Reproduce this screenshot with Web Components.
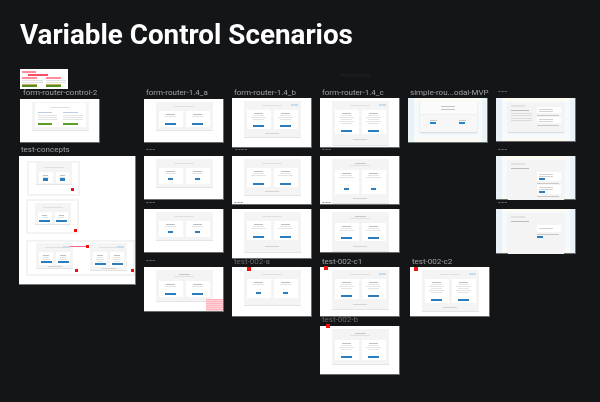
<!DOCTYPE html>
<html>
<head>
<meta charset="utf-8">
<title>Variable Control Scenarios</title>
<style>
    html, body { margin: 0; height: 100%; background: #141517; overflow: hidden; }
</style>
</head>
<body>
<design-board>
    <span slot="title">Variable Control Scenarios</span>

    <note-frame x="20" y="69" w="48" h="20"></note-frame>

    <canvas-frame x="20" y="99" w="80" h="44" label="form-router-control-2" lx="3" ly="-11"><mock-modal h="28" variant="green"></mock-modal></canvas-frame>

    <canvas-frame x="144" y="99" w="80" h="44" label="form-router-1.4_a" lx="2" ly="-11"><mock-modal h="28" ch="16" lines="2"></mock-modal></canvas-frame>
    <canvas-frame x="144" y="156" w="80" h="44" label="---"><mock-modal h="28" ch="16" btn="narrow" lines="2"></mock-modal></canvas-frame>
    <canvas-frame x="144" y="209" w="80" h="44" label="---"><mock-modal h="28" ch="16" btn="narrow" lines="2"></mock-modal></canvas-frame>
    <canvas-frame x="144" y="267" w="80" h="45" label="---"><mock-modal h="31" ch="16" head="two" lines="2"></mock-modal><pink-note></pink-note></canvas-frame>

    <canvas-frame x="232" y="98" w="80" h="50" label="form-router-1.4_b" lx="2"><mock-modal h="36" ch="19" link foot lines="4"></mock-modal></canvas-frame>
    <canvas-frame x="232" y="156" w="80" h="49" label="----" lx="3"><mock-modal h="36" ch="19" foot lines="3" bold></mock-modal></canvas-frame>
    <canvas-frame x="232" y="209" w="80" h="50" label="---"><mock-modal h="40" ch="19" foot lines="3"></mock-modal></canvas-frame>
    <canvas-frame x="232" y="267" w="80" h="50" label="test-002-a" lx="2" dim mark="15,0"><mock-modal h="35" ch="19" btn="narrow" lines="2"></mock-modal></canvas-frame>

    <canvas-frame x="320" y="98" w="80" h="50" label="form-router-1.4_c" lx="2"><mock-modal h="44" ch="24" link foot lines="6"></mock-modal></canvas-frame>
    <canvas-frame x="320" y="156" w="80" h="49" label="---" lx="2"><mock-modal h="44" ch="24" head="two" btn="narrow" foot lines="3"></mock-modal></canvas-frame>
    <canvas-frame x="320" y="209" w="80" h="44" label="---" lx="2"><mock-modal h="39" ch="18" head="two" foot lines="3"></mock-modal></canvas-frame>
    <canvas-frame x="320" y="267" w="80" h="50" label="test-002-c1" lx="2" mark="4,-1"><mock-modal h="39" ch="20" link foot lines="4" bold></mock-modal></canvas-frame>
    <canvas-frame x="320" y="326" w="80" h="49" label="test-002-b" lx="2" ly="-11" dim mark="6,-2"><mock-modal h="35" ch="20" head="two" lines="4" bold></mock-modal></canvas-frame>

    <canvas-frame x="408" y="98" w="80" h="45" label="simple-rou...odal-MVP" lx="2" map><mock-modal h="31" variant="simple"></mock-modal></canvas-frame>
    <canvas-frame x="410" y="267" w="80" h="50" label="test-002-c2" lx="2" mark="4,0"><mock-modal h="41" ch="24" link foot lines="6" bold></mock-modal></canvas-frame>

    <canvas-frame x="496" y="98" w="80" h="44" label="---" lx="2" map><side-modal h="30"></side-modal></canvas-frame>
    <canvas-frame x="496" y="156" w="80" h="44" label="---" lx="2" map><side-modal h="42" kind="buttons"></side-modal></canvas-frame>
    <canvas-frame x="496" y="209" w="80" h="45" label="---" lx="2" map><side-modal h="42" kind="select"></side-modal></canvas-frame>

    <concept-board x="19" y="156" w="117" h="129" label="test-concepts"></concept-board>

    <span slot="ghost">Historically</span>
</design-board>

<script>
    // the dark canvas with the page title
    class DesignBoard extends HTMLElement {
        constructor() {
            super();
            this.attachShadow({ mode: 'open' });
            this.shadowRoot.innerHTML = `
                <style>
                    :host { display: block; position: relative; width: 600px; height: 402px; overflow: hidden; font-family: Roboto, sans-serif; filter: blur(0.3px); }
                    header { padding: 17px 0 0 20px; font-size: 27.8px; line-height: 36px; font-weight: 700; color: #fff; }
                    .ghost { position: absolute; left: 340px; top: 71px; font-size: 6px; color: #232427; }
                </style>
                <header><slot name="title"></slot></header>
                <div class="ghost"><slot name="ghost"></slot></div>
                <slot></slot>
            `;
        }
    }

    class CanvasFrame extends HTMLElement {
        constructor() {
            super();
            this.attachShadow({ mode: 'open' });
            this.shadowRoot.innerHTML = `
                <style>
                    :host { display: block; position: absolute; background: #fff; box-shadow: inset -1px -1px 0 #6a6b6d; }
                    .label { position: absolute; left: var(--lx, 0); top: var(--ly, -10px); font-size: 8px; line-height: 9px; white-space: nowrap; color: #a0a1a3; }
                    .label.dim { color: #68696c; }
                    .label.dash { font-size: 7px; font-weight: 700; letter-spacing: 0.4px; color: #808183; }
                    .body { width: 100%; height: 100%; display: flex; justify-content: center; align-items: flex-start; padding-top: 3px; box-sizing: border-box; position: relative; overflow: hidden; }
                    .mark { position: absolute; width: 4px; height: 4px; background: #f20f0f; }
                    .map { position: absolute; inset: 0 1px 1px 0; background:
                        linear-gradient(90deg, #e9f2f8 0 6px, transparent 6px 74px, #eaf3f8 74px),
                        linear-gradient(#fbfbf2 0 3px, #f6fafc 3px 40px, #fbfbf3 40px); }
                </style>
                <div class="label"></div>
                <div class="body"><slot></slot></div>
            `;
        }

        connectedCallback() {
            const [x, y, w, h] = ['x', 'y', 'w', 'h'].map((name) => this.getAttribute(name));
            Object.assign(this.style, { left: `${x}px`, top: `${y}px`, width: `${w}px`, height: `${h}px` });

            const label = this.shadowRoot.querySelector('.label');
            const text = this.getAttribute('label');
            label.textContent = text;
            label.classList.toggle('dim', this.hasAttribute('dim'));
            label.classList.toggle('dash', /^-+$/.test(text));
            label.style.setProperty('--lx', `${this.getAttribute('lx') || 2}px`);
            label.style.setProperty('--ly', `${this.getAttribute('ly') || -10}px`);

            if (this.hasAttribute('map')) {
                const map = document.createElement('div');
                map.className = 'map';
                this.shadowRoot.querySelector('.body').prepend(map);
            }
            if (this.hasAttribute('mark')) {
                const [mx, my] = this.getAttribute('mark').split(',');
                const mark = document.createElement('div');
                mark.className = 'mark';
                mark.style.left = `${mx}px`;
                mark.style.top = `${my}px`;
                this.shadowRoot.appendChild(mark);
            }
        }
    }

    // the blurred "choose your plan" modal shown inside most frames
    class MockModal extends HTMLElement {
        constructor() {
            super();
            this.attachShadow({ mode: 'open' });
        }

        connectedCallback() {
            const h = this.getAttribute('h') || 28;
            const ch = this.getAttribute('ch') || 16;
            const lines = Number(this.getAttribute('lines') || 2);
            const variant = this.getAttribute('variant');
            const narrow = this.getAttribute('btn') === 'narrow';
            const bars = Array.from({ length: lines }, (_, i) => `<i style="width:${i === 0 ? 38 : 62 - (i % 2) * 14}%"></i>`).join('');
            const card = `<div class="card ${narrow ? 'narrow' : ''}"><div class="text">${bars}</div><b></b></div>`;

            let content = `<div class="cards" style="height:${ch}px">${card}${card}</div>`;
            if (variant === 'green') {
                content = `<div class="sheet"><div class="head"><u></u></div><div class="cols">
                    ${'<div class="col"><i class="blue"></i><i></i><i></i><i></i><b></b></div>'.repeat(2)}</div></div>`;
            } else if (variant === 'simple') {
                content = `<div class="simple"><div class="simplehead"><u></u><u></u></div><div class="simplerow">
                    ${'<div class="choice"><i></i><b></b></div>'.repeat(2)}</div></div>`;
            }

            const head = variant ? '' : `<div class="head ${this.getAttribute('head') === 'two' ? 'two' : ''}">
                ${this.getAttribute('head') === 'two' ? '<em></em>' : ''}<u></u>${this.hasAttribute('link') ? '<s></s>' : ''}</div>`;
            const foot = this.hasAttribute('foot') ? '<div class="foot"><i></i></div>' : '';

            this.shadowRoot.innerHTML = `
                <style>
                    :host { display: flex; flex-direction: column; width: 57px; height: ${h}px; padding: 0 3px; box-sizing: border-box; background: #f4f4f4; box-shadow: 0 1px 0 #e4e4e4; position: relative; flex: none; filter: blur(0.25px); }
                    .head { height: 9px; flex: none; display: flex; flex-direction: column; align-items: center; justify-content: center; gap: 1px; position: relative; }
                    .head.two { height: 11px; }
                    u { display: block; width: 20px; height: 1px; background: #e0e0e0; }
                    em { display: block; width: 11px; height: 1px; background: #c8c8c8; }
                    s { position: absolute; right: 0; top: 3px; width: 7px; height: 2px; background: #c9dcec; }
                    .cards { display: flex; gap: 3px; flex: none; }
                    .card { flex: 1; background: #fff; display: flex; flex-direction: column; align-items: center; padding: 3px 0 2px; box-sizing: border-box; }
                    .text { flex: 1; width: 100%; display: flex; flex-direction: column; align-items: center; gap: 1px; }
                    i { display: block; height: 1px; background: #e4e4e4; }
                    .text i:first-child { background: #c0c0c0; }
                    b { display: block; width: 11px; height: 2px; background: #2a7cbc; flex: none; }
                    .narrow b { width: 5px; margin-bottom: 2px; height: 2.5px; }
                    .foot { flex: 1; display: flex; align-items: center; justify-content: center; }
                    .foot i { width: 14px; background: #d4d4d4; }
                    .sheet { flex: 1; margin: 1px 0 3px; background: #fff; display: flex; flex-direction: column; }
                    .cols { flex: 1; display: flex; padding: 0 3px 2px; gap: 6px; }
                    .col { flex: 1; display: flex; flex-direction: column; gap: 1px; }
                    .col i { width: 100%; background: #e4e4e4; }
                    .col i.blue { background: #bccde4; width: 75%; margin-bottom: 1px; }
                    .col b { width: 75%; height: 2.5px; background: #5f9e24; margin-top: auto; }
                    .simple { flex: 1; margin: 0 -3px; background: #fff; box-shadow: 0 1px 2px #d3dbe0; display: flex; flex-direction: column; }
                    .simplehead { height: 13px; background: #fbfbfb; border-bottom: 1px solid #efefef; display: flex; flex-direction: column; align-items: center; justify-content: center; gap: 2px; }
                    .simplehead u { width: 14px; background: #c4c4c4; }
                    .simplerow { flex: 1; display: flex; justify-content: space-around; align-items: center; background: #f7f7f7; padding: 0 0 3px; }
                    .choice { display: flex; flex-direction: column; gap: 1px; }
                    .choice i { width: 7px; background: #c8c8c8; }
                    .choice b { width: 6px; height: 2px; background: #1e88d2; }
                </style>
                ${head}${content}${foot}
            `;
        }
    }

    // modal over a map, copy on the left and option boxes on the right
    class SideModal extends HTMLElement {
        constructor() {
            super();
            this.attachShadow({ mode: 'open' });
        }

        connectedCallback() {
            const kind = this.getAttribute('kind');
            const option = (button) => `<div class="box">${'<i></i><i></i>'}${button ? '<b></b>' : ''}</div><i class="note"></i>`;
            let right = option(false) + option(false);
            let left = '<i class="dark"></i><i></i><i></i><i></i><i></i>';
            if (kind === 'buttons') {
                right = option(true) + option(true);
                left = '<i class="dark"></i>';
            } else if (kind === 'select') {
                right = '<div class="box select"><i></i></div><i class="note"></i><b></b>';
                left = '<i class="dark"></i>';
            }
            this.shadowRoot.innerHTML = `
                <style>
                    :host { display: flex; flex: none; width: 56px; height: ${this.getAttribute('h')}px; margin-top: 1px; padding: 3px; gap: 3px; box-sizing: border-box; background: #f4f4f4; box-shadow: 0 1px 1px #dcdcdc; position: relative; filter: blur(0.25px); }
                    .left, .right { flex: 1; display: flex; flex-direction: column; gap: 1.5px; min-width: 0; }
                    .left { padding-top: 5px; }
                    .right { padding-top: ${kind ? 9 : 2}px; flex: 1.05; }
                    h6 { position: absolute; margin: 0; left: 3px; top: 3px; width: 14px; height: 2px; background: #e2e2e2; }
                    i { display: block; height: 1px; background: #dcdcdc; width: 90%; }
                    i.dark { background: #bcbcbc; width: 80%; }
                    .box { background: #fff; padding: 1.5px 2px; display: flex; flex-direction: column; gap: 1px; }
                    .box i { width: 70%; background: #d2d2d2; }
                    .select { padding: 3px 2px; }
                    .note { background: #c8c8c8; }
                    b { display: block; width: 6px; height: 2px; background: #2a7cbc; }
                </style>
                <h6></h6>
                <div class="left">${left}</div>
                <div class="right">${right}</div>
            `;
        }
    }

    class NoteFrame extends HTMLElement {
        constructor() {
            super();
            this.attachShadow({ mode: 'open' });
            this.shadowRoot.innerHTML = `
                <style>
                    :host { display: block; position: absolute; background: #fff; }
                    .row { display: grid; grid-template-columns: 1fr 1fr; gap: 3px; padding: 8px 2px 0; }
                    .top { display: flex; flex-direction: column; gap: 1px; padding: 1px 2px 0; height: 6px; box-sizing: border-box; position: absolute; top: 1px; left: 0; }
                    i { display: block; height: 1px; }
                    .col { display: flex; flex-direction: column; gap: 1px; }
                    .p { background: #ff8d99; height: 2px; width: 75%; }
                    .r { background: #ff4d63; }
                    .g { background: #e0e0e0; }
                    b { display: block; height: 2px; width: 75%; margin-top: 1px; background: #5a8f20; box-shadow: 0 -1px 0 #c0b060; }
                </style>
                <div class="top"><i class="p" style="width:14px"></i><i class="p r" style="width:20px;margin-left:6px;height:2px"></i></div>
                <div class="row">
                    <div class="col"><i class="p"></i><i class="g"></i><i class="g"></i><b></b></div>
                    <div class="col"><i class="p"></i><i class="g"></i><i class="g"></i><b></b></div>
                </div>
            `;
        }

        connectedCallback() {
            const [x, y, w, h] = ['x', 'y', 'w', 'h'].map((name) => this.getAttribute(name));
            Object.assign(this.style, { left: `${x}px`, top: `${y}px`, width: `${w}px`, height: `${h}px` });
        }
    }

    // pink annotation sitting on the bottom corner of a frame
    class PinkNote extends HTMLElement {
        constructor() {
            super();
            this.attachShadow({ mode: 'open' });
            this.shadowRoot.innerHTML = `
                <style>
                    :host { position: absolute; right: 1px; bottom: 1px; width: 17px; height: 12px; background: repeating-linear-gradient(#ffb4be 0 1px, #ffd2d7 1px 2px); }
                </style>
            `;
        }
    }

    // the wide frame with nested sketches, red markers and one arrow
    class ConceptBoard extends HTMLElement {
        constructor() {
            super();
            this.attachShadow({ mode: 'open' });
            this.shadowRoot.innerHTML = `
                <style>
                    :host { display: block; position: absolute; background: #fff; box-shadow: inset -1px -1px 0 #77787a; }
                    .label { position: absolute; left: 2px; top: -11px; font-size: 8px; line-height: 9px; color: #a0a1a3; white-space: nowrap; }
                    .sketch { position: absolute; border: 2px solid #f3f3f3; box-sizing: border-box; }
                    .slot { position: absolute; }
                    .dot { position: absolute; width: 3px; height: 3px; background: #f30d0d; }
                    .arrow { position: absolute; left: 51px; top: 90px; width: 17px; height: 1px; background: #f56b80; }
                </style>
                <div class="label"></div>
                <div class="sketch" style="left:8px;top:5px;width:53px;height:35px"></div>
                <div class="sketch" style="left:7px;top:43px;width:53px;height:35px"></div>
                <div class="sketch" style="left:7px;top:84px;width:109px;height:36px"></div>
                <div class="slot" style="left:17px;top:7px"><mock-modal h="21" ch="11" btn="narrow" lines="2" style="width:36px"></mock-modal></div>
                <div class="slot" style="left:16px;top:47px"><mock-modal h="21" ch="12" lines="2" style="width:36px"></mock-modal></div>
                <div class="slot" style="left:17px;top:87px"><mock-modal h="25" ch="13" link lines="3" foot style="width:37px"></mock-modal></div>
                <div class="slot" style="left:71px;top:87px"><mock-modal h="27" ch="15" link lines="4" foot style="width:37px"></mock-modal></div>
                <div class="arrow"></div>
                <div class="dot" style="left:52px;top:32px"></div>
                <div class="dot" style="left:55px;top:73px"></div>
                <div class="dot" style="left:56px;top:113px"></div>
                <div class="dot" style="left:67px;top:89px"></div>
                <div class="dot" style="left:112px;top:113px"></div>
            `;
        }

        connectedCallback() {
            const [x, y, w, h] = ['x', 'y', 'w', 'h'].map((name) => this.getAttribute(name));
            Object.assign(this.style, { left: `${x}px`, top: `${y}px`, width: `${w}px`, height: `${h}px` });
            this.shadowRoot.querySelector('.label').textContent = this.getAttribute('label');
        }
    }

    customElements.define('design-board', DesignBoard);
    customElements.define('canvas-frame', CanvasFrame);
    customElements.define('mock-modal', MockModal);
    customElements.define('side-modal', SideModal);
    customElements.define('note-frame', NoteFrame);
    customElements.define('pink-note', PinkNote);
    customElements.define('concept-board', ConceptBoard);
</script>
</body>
</html>
